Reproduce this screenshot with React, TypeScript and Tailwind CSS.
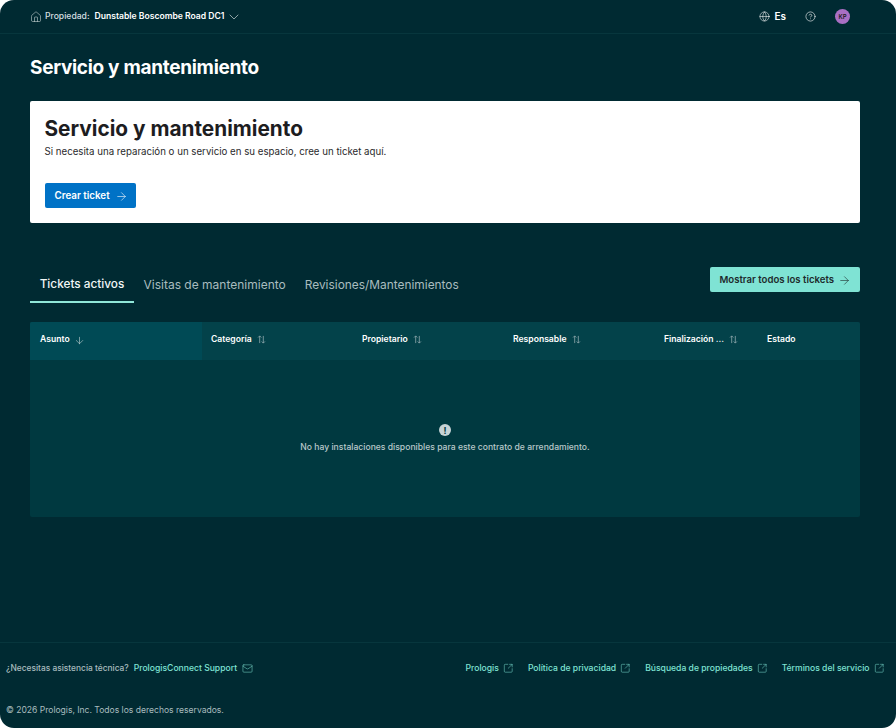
import { ArrowDown, ArrowRight, ChevronDown, CircleHelp, Globe, House, Mail, SquareArrowOutUpRight } from 'lucide-react';

const columns = [
  { label: 'Categoría', width: 'w-[151px]' },
  { label: 'Propietario', width: 'w-[151px]' },
  { label: 'Responsable', width: 'w-[151px]' },
  { label: 'Finalización ...', width: 'w-[103px]' },
];

const footerLinks = ['Prologis', 'Política de privacidad', 'Búsqueda de propiedades', 'Términos del servicio'];

function SortIcon() {
  return (
    <svg viewBox="0 0 10 10" className="h-[9px] w-[9px] text-[#8fa9ad]" fill="none" stroke="currentColor" strokeWidth="0.9">
      <path d="M3 9V1M1.2 2.8 3 1l1.8 1.8M7 1v8M5.2 7.2 7 9l1.8-1.8" />
    </svg>
  );
}

export default function App() {
  return (
    <div className="bg-white">
      <div className="flex h-[728px] w-[896px] flex-col overflow-hidden rounded-[14px] bg-[#002a32] font-['Inter',sans-serif] text-white">
        <header className="flex h-[34px] shrink-0 items-center justify-between border-b border-[#07363d] pl-[30px] pr-[46px]">
          <div className="flex items-center text-[8.6px] font-semibold">
            <House className="h-[12px] w-[12px] text-[#d5dfe0]" strokeWidth={1.1} />
            <span className="ml-[3px] font-medium text-[#d5dfe0]">Propiedad:</span>
            <span className="ml-[5px]">Dunstable Boscombe Road DC1</span>
            <ChevronDown className="ml-[2px] h-[16px] w-[16px] text-[#d5dfe0]" strokeWidth={1} />
          </div>
          <div className="flex items-center">
            <Globe className="h-[11px] w-[11px]" strokeWidth={1.2} />
            <span className="ml-[4px] text-[10px] font-semibold">Es</span>
            <CircleHelp className="ml-[19px] h-[11px] w-[11px]" strokeWidth={1.3} />
            <span className="ml-[19px] flex h-[15px] w-[15px] items-center justify-center rounded-full bg-[#a96fc4] text-[6px] font-semibold text-[#1d1d1f]">KP</span>
          </div>
        </header>

        <main className="flex-1 pl-[30px] pr-[36px]">
          <h1 className="mt-[21px] text-[19px] font-bold leading-[26px] tracking-[-0.3px]">Servicio y mantenimiento</h1>

          <section className="mt-[20px] h-[121.5px] rounded-[2px] bg-white pl-[14.5px] pr-[15px] pt-[14px] text-[#1d1d1f]">
            <h2 className="text-[20.8px] font-bold leading-[27px]">Servicio y mantenimiento</h2>
            <p className="mt-[3px] text-[9.7px] leading-[14px] text-[#2a2a2c]">Si necesita una reparación o un servicio en su espacio, cree un ticket aquí.</p>
            <button type="button" className="mt-[24px] flex h-[25px] w-[91.5px] items-center justify-between rounded-[2px] bg-[#0072c6] pl-[10px] pr-[8px] pt-[1px] text-[9.8px] font-semibold text-white">
              Crear ticket
              <ArrowRight className="h-[13px] w-[13px]" strokeWidth={1.1} />
            </button>
          </section>

          <div className="mt-[44.5px] flex items-start justify-between">
            <div className="flex items-start">
              <div className="flex h-[36px] w-[104px] items-center justify-center border-b-2 border-[#8fe6d8] pt-[1px] text-[11.8px] font-medium text-[#f2f6f6]">Tickets activos</div>
              <div className="ml-[9.5px] flex h-[36px] items-center text-[12px] text-[#a9bcbf]">Visitas de mantenimiento</div>
              <div className="ml-[19px] flex h-[36px] items-center text-[11.9px] text-[#a9bcbf]">Revisiones/Mantenimientos</div>
            </div>
            <button type="button" className="flex h-[25px] w-[150px] items-center justify-between whitespace-nowrap rounded-[2px] bg-[#7fe3d4] pl-[9.5px] pr-[9px] pt-[1px] text-[9.6px] font-semibold text-[#1d2a2c]">
              Mostrar todos los tickets
              <ArrowRight className="h-[13px] w-[13px]" strokeWidth={1.1} />
            </button>
          </div>

          <section className="mt-[19px] h-[195px] overflow-hidden rounded-[2px] bg-[#003940]">
            <div className="flex h-[38px] bg-[#03424a] pb-[3px] text-[8.6px] font-semibold">
              <div className="-mb-[3px] flex w-[172px] items-center bg-[#004a55] pb-[3px] pl-[10px]">
                Asunto
                <ArrowDown className="ml-[4px] h-[11px] w-[11px] translate-y-[1px] text-[#d5dfe0]" strokeWidth={1.2} />
              </div>
              {columns.map((col) => (
                <div key={col.label} className={`flex ${col.width} items-center pl-[9px]`}>
                  {col.label}
                  <span className="ml-[5px] flex"><SortIcon /></span>
                </div>
              ))}
              <div className="flex items-center pl-[9px]">Estado</div>
            </div>
            <div className="flex flex-col items-center pt-[64px]">
              <span className="flex h-[12px] w-[12px] items-center justify-center rounded-full bg-[#c6d3d6] text-[9px] font-bold leading-none text-[#003940]">!</span>
              <p className="mt-[5px] text-[8.6px] font-medium leading-[12px] text-[#b9c8ca]">No hay instalaciones disponibles para este contrato de arrendamiento.</p>
            </div>
          </section>
        </main>

        <footer className="h-[86px] shrink-0 border-t border-[#07363d] pl-[6px] pr-[12px]">
          <div className="mt-[19px] flex items-center justify-between text-[8.6px] font-medium">
            <div className="flex items-center">
              <span className="text-[8.4px] text-[#a9bcbf]">¿Necesitas asistencia técnica?</span>
              <span className="ml-[5px] text-[#7fe3d4]">PrologisConnect Support</span>
              <Mail className="ml-[4.5px] h-[11px] w-[11px] text-[#7fe3d4]" strokeWidth={1.1} />
            </div>
            <div className="flex items-center gap-[14.5px]">
              {footerLinks.map((link) => (
                <span key={link} className="flex items-center text-[#7fe3d4]">
                  {link}
                  <SquareArrowOutUpRight className="ml-[4px] h-[10.5px] w-[10.5px]" strokeWidth={1.15} />
                </span>
              ))}
            </div>
          </div>
          <p className="mt-[29px] text-[8.55px] leading-[12px] text-[#a9bcbf]">© 2026 Prologis, Inc. Todos los derechos reservados.</p>
        </footer>
      </div>
    </div>
  );
}
